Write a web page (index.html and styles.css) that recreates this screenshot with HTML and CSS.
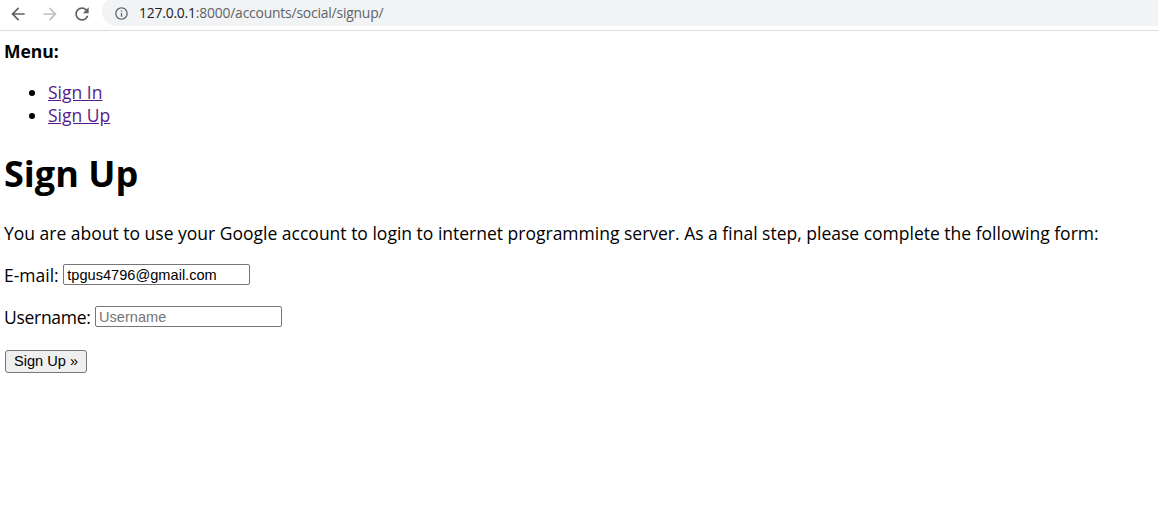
FILE: index.html
```html
<!DOCTYPE html>
<html lang="en">
<head>
<meta charset="utf-8">
<title>Signup</title>
<link rel="stylesheet" href="styles.css">
</head>
<body>
<header class="chrome">
  <div class="nav-buttons">
    <span class="nav-btn">
      <svg viewBox="0 0 24 24" width="20" height="20"><path fill="#5f6368" d="M20 11H7.83l5.59-5.59L12 4l-8 8 8 8 1.41-1.41L7.83 13H20v-2z"/></svg>
    </span>
    <span class="nav-btn">
      <svg viewBox="0 0 24 24" width="20" height="20"><path fill="#bdc1c6" d="M4 11h12.17l-5.59-5.59L12 4l8 8-8 8-1.41-1.41L16.17 13H4v-2z"/></svg>
    </span>
    <span class="nav-btn">
      <svg viewBox="0 0 24 24" width="20" height="20"><path fill="#5f6368" d="M17.65 6.35C16.2 4.9 14.21 4 12 4c-4.42 0-7.99 3.58-7.99 8s3.57 8 7.99 8c3.73 0 6.84-2.55 7.73-6h-2.08c-.82 2.33-3.04 4-5.65 4-3.31 0-6-2.69-6-6s2.69-6 6-6c1.66 0 3.14.69 4.22 1.78L13 11h7V4l-2.35 2.35z"/></svg>
    </span>
  </div>
  <div class="omnibox">
    <svg class="info" viewBox="0 0 24 24" width="15" height="15"><path fill="#5f6368" d="M11 7h2v2h-2zm0 4h2v6h-2zm1-9C6.48 2 2 6.48 2 12s4.48 10 10 10 10-4.48 10-10S17.520 2 12 2zm0 18c-4.41 0-8-3.59-8-8s3.59-8 8-8 8 3.59 8 8-3.59 8-8 8z"/></svg>
    <span class="url"><span class="host">127.0.0.1</span><span class="path">:8000/accounts/social/signup/</span></span>
  </div>
</header>
<main class="page">
  <div class="menu">
    <strong>Menu:</strong>
    <ul class="menu-list">
      <li><a href="#">Sign In</a></li>
      <li><a href="#">Sign Up</a></li>
    </ul>
  </div>
  <h1 class="title">Sign Up</h1>
  <p class="intro">You are about to use your Google account to login to internet programming server. As a final step, please complete the following form:</p>
  <form class="signup" onsubmit="return false">
    <p class="field"><label class="email-label" for="id_email">E-mail:</label> <input class="text-input" type="email" id="id_email" value="tpgus4796@gmail.com"></p>
    <p class="field"><label class="user-label" for="id_username">Username:</label> <input class="text-input" type="text" id="id_username" placeholder="Username"></p>
    <button class="submit" type="submit">Sign Up &raquo;</button>
  </form>
</main>
</body>
</html>
```
FILE: styles.css
```css
html, body { margin: 0; padding: 0; background: #fff; }

.chrome {
  display: flex;
  align-items: flex-start;
  height: 30px;
  border-bottom: 1px solid #dadce0;
  overflow: hidden;
  font-family: "Open Sans", sans-serif;
}
.nav-buttons {
  display: flex;
  gap: 12px;
  padding: 4px 0 0 8px;
}
.nav-btn {
  display: flex;
  width: 20px;
  height: 20px;
}
.omnibox {
  flex: 1;
  display: flex;
  align-items: center;
  height: 29px;
  margin: -3px 0 0 10px;
  padding: 0 0 0 12px;
  background: #f1f3f4;
  border-radius: 15px 0 0 15px;
}
.info { margin-top: 3px; }
.url {
  margin: 2px 0 0 10px;
  font-size: 13.9px;
  letter-spacing: -0.2px;
}
.host { color: #202124; }
.path { color: #5f6368; }

.page {
  margin: 0;
  padding: 8.8px 0 8.8px 4px;
  font-family: "Open Sans", sans-serif;
  font-size: 17.5px;
  line-height: 23.4px;
  color: #000;
}
.menu strong { font-weight: 700; }
.menu-list {
  margin: 17.6px 0;
  padding-left: 44px;
}
.menu-list a { color: #551a8b; }
.title {
  margin: 23.6px 0;
  font-size: 36px;
  line-height: 46.8px;
  font-weight: 700;
}
.intro { margin: 17.6px 0; }
.field {
  margin: 17.6px 0;
  line-height: 24.6px;
}
.user-label { letter-spacing: -0.3px; }
.text-input {
  box-sizing: border-box;
  width: 187px;
  height: 21px;
  margin: 0;
  padding: 1px 3px;
  border: 1px solid #767676;
  border-radius: 2px;
  font-family: "Liberation Sans", Arial, sans-serif;
  font-size: 14.6px;
  color: #000;
  vertical-align: 2px;
}
.text-input::placeholder { color: #757575; }
.submit {
  box-sizing: border-box;
  height: 23px;
  margin: 3px 0 0 1px;
  padding: 0 8px;
  border: 1px solid #767676;
  border-radius: 3px;
  background: #efefef;
  font-family: "Liberation Sans", Arial, sans-serif;
  font-size: 14.6px;
  color: #000;
}
```
